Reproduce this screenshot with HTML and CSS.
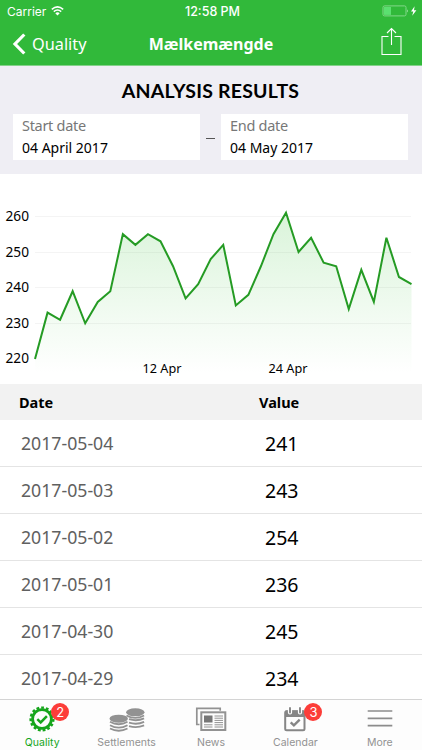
FILE: index.html
```
<!DOCTYPE html>
<html lang="en">
<head>
  <meta charset="UTF-8">
  <meta name="viewport" content="width=device-width, initial-scale=1">
  <title>Mælkemængde</title>
  <link rel="stylesheet" href="styles.css">
</head>
<body>

  <header>
    <div class="status">
      <div class="carrier">
        <span>Carrier</span>
        <svg width="13" height="10" viewBox="0 0 13 10" fill="none" stroke="#fff" stroke-width="1.5">
          <path d="M.8 3.4Q6.5-1.6 12.2 3.4M2.8 5.6Q6.5 2.4 10.2 5.6"/>
          <path d="M4.3 7.2Q6.5 5.4 8.7 7.2L6.5 9.4Z" fill="#fff" stroke="none"/>
        </svg>
      </div>
      <span class="time">12:58 PM</span>
      <svg class="battery" width="36" height="12" viewBox="0 0 36 12">
        <rect x="1" y=".9" width="23" height="10" rx="1.5" fill="none" stroke="#83d88a"/>
        <rect x="2" y="1.9" width="7" height="8" fill="#5be070"/>
        <path d="M25 4.2q1.8 1.7 0 3.4z" fill="#b5e9b9"/>
        <path d="M32.6 1.2L29 6.6h2.3L30.2 10.8 34.4 5.2H32z" fill="#fff"/>
      </svg>
    </div>
    <nav>
      <a class="back" href="#">
        <svg width="14" height="22" viewBox="0 0 14 22"><path d="M12.3 1.5L3 11l9.3 9.5" fill="none" stroke="#fff" stroke-width="3.2"/></svg>
        <span>Quality</span>
      </a>
      <h1>Mælkemængde</h1>
      <a class="share" href="#">
        <svg width="21" height="29" viewBox="0 0 21 29" fill="none" stroke="#fff" stroke-width="1.1">
          <path d="M7.5 9.5H1v18h19v-18h-6.500M10.5 18V1.5M6 6l4.500-4.500L15 6"/>
        </svg>
      </a>
    </nav>
  </header>

  <section class="filter">
    <h2>ANALYSIS RESULTS</h2>
    <div class="dates">
      <div class="date-box">
        <span class="label">Start date</span>
        <span class="value">04 April 2017</span>
      </div>
      <span class="dash"></span>
      <div class="date-box">
        <span class="label">End date</span>
        <span class="value">04 May 2017</span>
      </div>
    </div>
  </section>

  <svg class="chart" width="422" height="210" viewBox="0 0 422 210">
    <defs>
      <linearGradient id="area" gradientUnits="userSpaceOnUse" x1="0" y1="41" x2="0" y2="-4">
        <stop offset="0" stop-color="#30c030" stop-opacity=".18"/>
        <stop offset="1" stop-color="#30c030" stop-opacity="0"/>
      </linearGradient>
    </defs>
    <path class="grid" d="M35 42.500H411M35 78.500H411M35 113.500H411M35 149.500H411"/>
    <!-- one unit = one day across, one value point up from 220 -->
    <g transform="translate(35 185) scale(12.55 -3.567)">
      <polygon fill="url(#area)" points="0,-4 0,0 1,13 2,11 3,19 4,10 5,16 6,19 7,35 8,32 9,35 10,33 11,26 12,17 13,21 14,28 15,32 16,15 17,18 18,26 19,35 20,41 21,30 22,34 23,27 24,26 25,14 26,25 27,16 28,34 29,23 30,21 30,-4"/>
      <polyline class="line" points="0,0 1,13 2,11 3,19 4,10 5,16 6,19 7,35 8,32 9,35 10,33 11,26 12,17 13,21 14,28 15,32 16,15 17,18 18,26 19,35 20,41 21,30 22,34 23,27 24,26 25,14 26,25 27,16 28,34 29,23 30,21"/>
    </g>
    <g class="y-axis">
      <text x="5.5" y="46.5">260</text>
      <text x="5.5" y="82.5">250</text>
      <text x="5.5" y="118">240</text>
      <text x="5.5" y="153.5">230</text>
      <text x="5.5" y="189">220</text>
    </g>
    <g class="x-axis">
      <text x="162" y="198.5">12 Apr</text>
      <text x="288" y="198.5">24 Apr</text>
    </g>
  </svg>

  <div class="results">
    <div class="row head"><span>Date</span><span>Value</span></div>
    <div class="row"><span>2017-05-04</span><span>241</span></div>
    <div class="row"><span>2017-05-03</span><span>243</span></div>
    <div class="row"><span>2017-05-02</span><span>254</span></div>
    <div class="row"><span>2017-05-01</span><span>236</span></div>
    <div class="row"><span>2017-04-30</span><span>245</span></div>
    <div class="row"><span>2017-04-29</span><span>234</span></div>
  </div>

  <footer>
    <a class="tab active" href="#">
      <svg width="28" height="28" viewBox="0 0 28 28" fill="none" stroke="#16a51c">
        <circle cx="14" cy="14" r="11.4" stroke-width="2.4" stroke-dasharray="2.8 1.975"/>
        <circle cx="14" cy="14" r="9.4" stroke-width="2.8"/>
        <path d="M9.3 14.2l3.4 3.2 6.2-6.2" stroke-width="2.5"/>
      </svg>
      <span>Quality</span>
      <b class="badge">2</b>
    </a>
    <a class="tab" href="#">
      <svg width="36" height="28" viewBox="0 0 36 28" fill="#929292">
        <ellipse cx="26.3" cy="7.3" rx="9.2" ry="4"/>
        <ellipse cx="9.7" cy="13.7" rx="9.2" ry="4"/>
        <g fill="none" stroke="#929292" stroke-width="1.8">
          <path d="M17.5 10.5q8.800 4.800 17.600 0M20 14.200q8 2.400 15.100-.8M20 17.700q8 2.400 15.100-.8M20 21.100q8 2.200 15.100-.8"/>
          <path d="M1 16.800q8.700 4.900 17.500 0M1 20.200q8.700 4.900 17.500 0M1 23.500q8.700 4.500 17.500 0"/>
        </g>
      </svg>
      <span>Settlements</span>
    </a>
    <a class="tab" href="#">
      <svg width="32" height="28" viewBox="0 0 32 28" fill="none" stroke="#929292">
        <path d="M4.5 19.5H1.800V3.300h23.400v2.500" stroke-width="1.7"/>
        <rect x="6.3" y="7.3" width="24" height="17.7" stroke-width="2"/>
        <rect x="9" y="10.5" width="8.5" height="7" fill="#777" stroke="none"/>
        <path d="M19.5 11H28M19.5 13.200H28M19.5 15.400H28M19.5 17.600H28M19.5 19.800H28M19.5 22H28M9 19.800h8.500M9 22h8.500" stroke-width="1"/>
      </svg>
      <span>News</span>
    </a>
    <a class="tab" href="#">
      <svg width="22" height="28" viewBox="0 0 22 28" fill="none" stroke="#868686">
        <rect x="1.2" y="6.2" width="19.3" height="19" rx="1.5" stroke-width="2"/>
        <path d="M1.5 5.5h18.700v6.500H1.500z" fill="#868686" stroke="none"/>
        <path d="M6 3v4.500M16 3v4.500" stroke="#fff" stroke-width="4.2" stroke-linecap="round"/>
        <path d="M6 3v4.500M16 3v4.500" stroke-width="1.9" stroke-linecap="round"/>
        <path d="M6.700 17.300l3.200 3 5.800-5.700" stroke-width="2.4"/>
      </svg>
      <span>Calendar</span>
      <b class="badge">3</b>
    </a>
    <a class="tab" href="#">
      <svg width="26" height="28" viewBox="0 0 26 28"><path d="M.7 6h24.600M.7 13.300h24.600M.7 20.600h24.600" stroke="#8c8c8c" stroke-width="1.7"/></svg>
      <span>More</span>
    </a>
  </footer>

</body>
</html>
```
FILE: styles.css
```
* {
  box-sizing: border-box;
}

body {
  margin: 0;
  height: 750px;
  overflow: hidden;
  display: flex;
  flex-direction: column;
  background-color: #fff;
  font-family: "Noto Sans", sans-serif;
  color: #000;
}

a {
  color: inherit;
  text-decoration: none;
}

svg {
  display: block;
}

header {
  height: 66px;
  flex: none;
  background-color: #31b93a;
  border-bottom: 1px solid #83d189;
  color: #fff;
}

.status {
  display: grid;
  grid-template-columns: 1fr auto 1fr;
  align-items: center;
  height: 22px;
  padding: 0 4px 0 7px;
  font-family: Inter, sans-serif;
  font-size: 12px;
}

.carrier {
  display: flex;
  align-items: center;
  gap: 5px;
}

.time {
  font-weight: 500;
  font-size: 12.5px;
}

.battery {
  justify-self: end;
}

nav {
  display: grid;
  grid-template-columns: 1fr auto 1fr;
  align-items: center;
  height: 43px;
  padding: 0 20px 0 12px;
}

.back {
  display: flex;
  align-items: center;
  gap: 6px;
  font-size: 16.3px;
}

h1 {
  margin: 0 0 0 8px;
  font-size: 16px;
  line-height: 22px;
}

.share {
  justify-self: end;
  padding-bottom: 4px;
}

.filter {
  flex: none;
  height: 108px;
  padding: 12px 14px 0 13px;
  background-color: #efeef4;
}

h2 {
  margin: 0;
  height: 36px;
  font-family: Lato, sans-serif;
  font-size: 19.5px;
  line-height: 26px;
  letter-spacing: 0.2px;
  text-align: center;
}

.dates {
  display: flex;
  align-items: center;
}

.date-box {
  flex: 1;
  height: 46px;
  padding-left: 9px;
  display: flex;
  flex-direction: column;
  background-color: #fff;
}

.label {
  height: 23px;
  font-size: 14.5px;
  line-height: 22px;
  letter-spacing: -0.3px;
  color: #777;
}

.value {
  font-size: 14px;
  line-height: 22px;
}

.dash {
  width: 9px;
  height: 1px;
  margin: 3px 6px 0;
  background-color: #555;
}

.chart {
  flex: none;
}

.grid {
  stroke: #f4f4f4;
}

.line {
  fill: none;
  stroke: #259b24;
  stroke-width: 2;
  vector-effect: non-scaling-stroke;
}

.y-axis {
  font-size: 13.7px;
}

.x-axis {
  font-size: 12.7px;
  text-anchor: middle;
}

.results {
  flex: 1;
  min-height: 0;
  overflow: hidden;
}

.row {
  display: grid;
  grid-template-columns: 244px 1fr;
  align-items: center;
  height: 47px;
  padding: 0 0 0 21px;
  border-bottom: 1px solid #e4e4e4;
  font-size: 17.7px;
  color: #606060;
}

.row span:last-child {
  color: #000;
  font-size: 19.5px;
}

.row.head {
  grid-template-columns: 240px 1fr;
  height: 36px;
  padding-left: 19px;
  border: 0;
  background-color: #f2f2f2;
  font-weight: bold;
}

.row.head span {
  font-size: 14.5px;
  color: #000;
}

footer {
  flex: none;
  height: 51px;
  display: grid;
  grid-template-columns: repeat(5, 1fr);
  border-top: 1px solid #d4d4d4;
  background-color: #fdfdfd;
}

.tab {
  position: relative;
  display: flex;
  flex-direction: column;
  align-items: center;
  padding-top: 5px;
  font-family: Inter, sans-serif;
  font-size: 10.5px;
  line-height: 20px;
  color: #929292;
}

.active {
  color: #16a51c;
}

.badge {
  position: absolute;
  top: 3px;
  left: calc(50% + 9px);
  width: 18px;
  height: 18px;
  border-radius: 50%;
  background-color: #fc3d39;
  color: #fff;
  font-size: 13px;
  font-weight: normal;
  line-height: 18px;
  text-align: center;
}
```
